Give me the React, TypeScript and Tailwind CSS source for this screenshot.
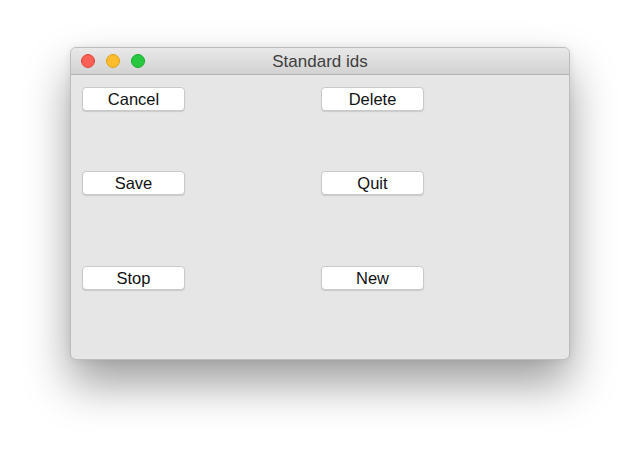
import React from "react";

const Btn = ({ label }: { label: string }) => (
  <div className="w-[103px] h-[24px] rounded-[4px] bg-white border border-[#c9c9c9] shadow-[0_1px_1px_rgba(0,0,0,0.12)] flex items-center justify-center pt-[1px] text-[16.5px] text-[#111] leading-none">
    {label}
  </div>
);

export default function App() {
  return (
    <div className="w-[640px] h-[453px] bg-white overflow-hidden pt-[47px] pl-[70px]" style={{ fontFamily: '"Liberation Sans", Arial, sans-serif' }}>
      <div className="w-[500px] h-[313px] rounded-[6px] bg-[#e6e6e6] border border-[#bdbdbd] shadow-[0_24px_45px_rgba(0,0,0,0.38),0_0_8px_rgba(0,0,0,0.08)] overflow-hidden flex flex-col">
        <div className="h-[27px] shrink-0 bg-gradient-to-b from-[#e9e9e9] to-[#d2d2d2] border-b border-[#b4b4b4] flex items-center relative">
          <div className="flex items-center gap-[11px] pl-[10px]">
            <div className="w-[14px] h-[14px] rounded-full bg-[#fe5f57] border border-[#e2463f]" />
            <div className="w-[14px] h-[14px] rounded-full bg-[#febc2e] border border-[#e1a116]" />
            <div className="w-[14px] h-[14px] rounded-full bg-[#28c840] border border-[#14ae2a]" />
          </div>
          <div className="absolute inset-0 flex items-center justify-center pt-[1px] text-[17px] text-[#404040]">
            Standard ids
          </div>
        </div>
        <div className="flex-1 pl-[11px] pt-[12px]">
          <div className="grid grid-cols-[239px_103px] grid-rows-[24px_24px_24px] gap-y-0">
            <div><Btn label="Cancel" /></div>
            <div><Btn label="Delete" /></div>
            <div className="mt-[60px]"><Btn label="Save" /></div>
            <div className="mt-[60px]"><Btn label="Quit" /></div>
            <div className="mt-[131px]"><Btn label="Stop" /></div>
            <div className="mt-[131px]"><Btn label="New" /></div>
          </div>
        </div>
      </div>
    </div>
  );
}
